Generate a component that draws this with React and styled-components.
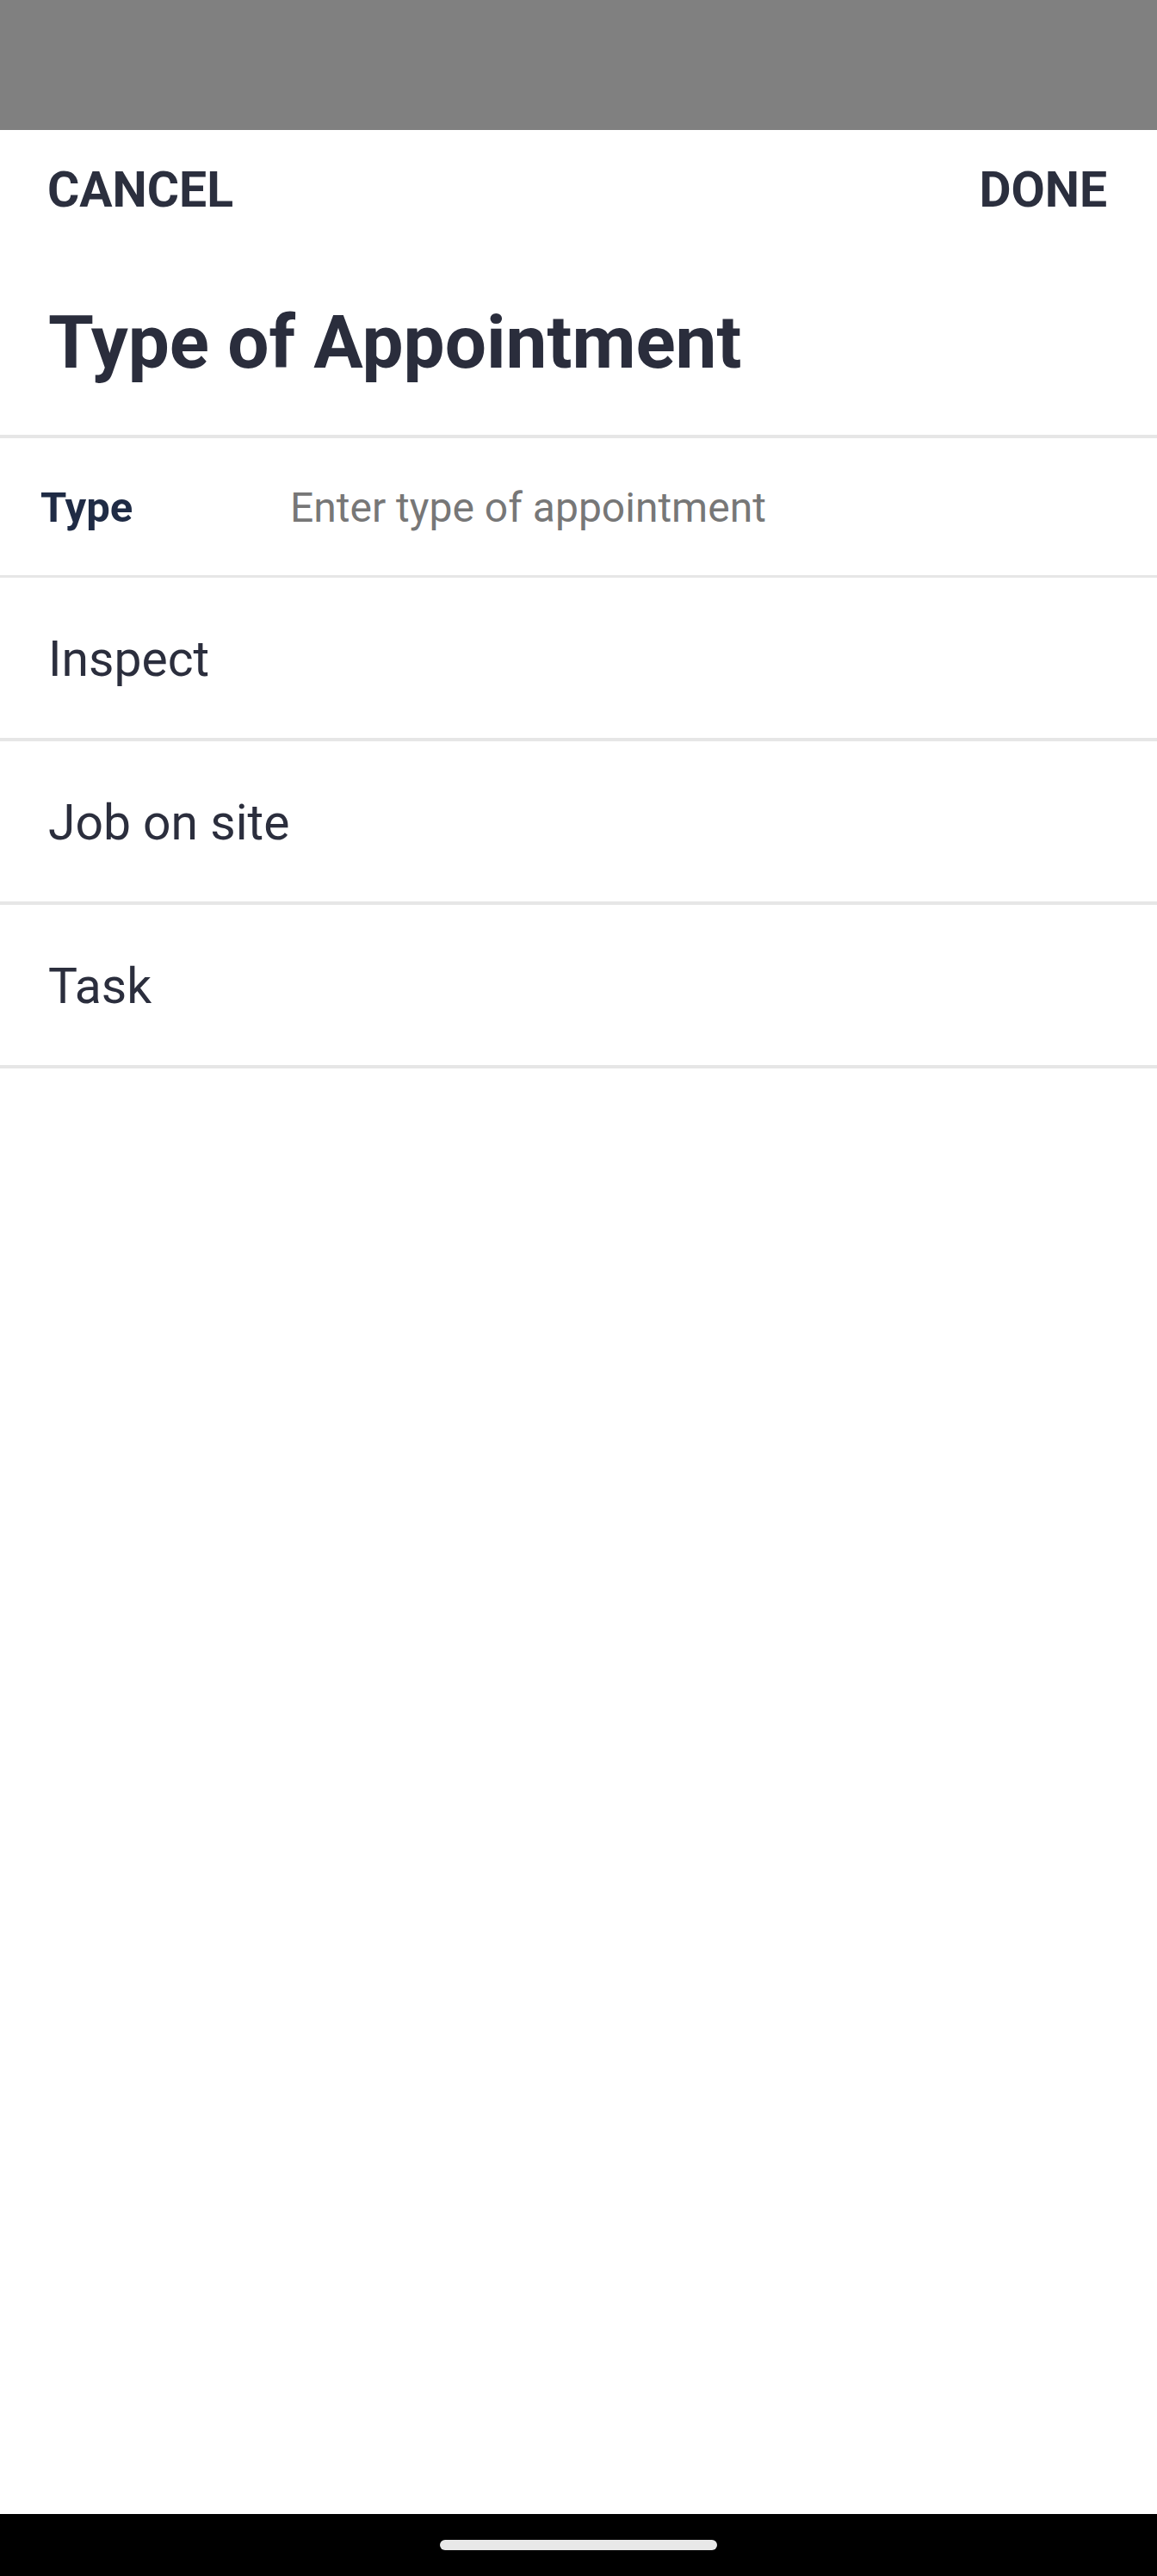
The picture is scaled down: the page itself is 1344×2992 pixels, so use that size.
import React from 'react';
import styled, { createGlobalStyle } from 'styled-components';

const GlobalStyle = createGlobalStyle`
  html, body {
    margin: 0;
    padding: 0;
    background: #ffffff;
  }
  body {
    font-family: Roboto, 'Noto Sans', sans-serif;
    -webkit-font-smoothing: antialiased;
  }
  * {
    box-sizing: border-box;
  }
`;

const Screen = styled.div`
  display: flex;
  flex-direction: column;
  min-height: 100vh;
  background: #ffffff;
`;

const StatusBar = styled.div`
  height: 151px;
  background: #808080;
  flex-shrink: 0;
`;

const Sheet = styled.div`
  flex: 1;
  display: flex;
  flex-direction: column;
`;

const Toolbar = styled.div`
  display: flex;
  justify-content: space-between;
  align-items: center;
  padding: 37px 58px 0 55px;
`;

const ToolbarButton = styled.button`
  background: none;
  border: none;
  padding: 0;
  margin: 0;
  font-family: Roboto, sans-serif;
  font-weight: 700;
  font-size: 57px;
  line-height: 66px;
  color: #2b2f3e;
  letter-spacing: 0;
  cursor: pointer;
`;

const Title = styled.h1`
  margin: 94px 0 0;
  padding: 0 56px 57px;
  font-family: Roboto, sans-serif;
  font-weight: 700;
  font-size: 85.5px;
  line-height: 100px;
  color: #2a2d3c;
  border-bottom: 4px solid #e6e6e6;
`;

const FieldRow = styled.label`
  display: flex;
  align-items: center;
  height: 162px;
  padding: 3px 0 0 47px;
  border-bottom: 3px solid #e6e6e6;
`;

const FieldLabel = styled.span`
  width: 290px;
  flex-shrink: 0;
  font-family: Roboto, sans-serif;
  font-weight: 700;
  font-size: 49px;
  line-height: 58px;
  color: #1f2b45;
`;

const FieldInput = styled.input`
  flex: 1;
  border: none;
  outline: none;
  padding: 0;
  background: transparent;
  font-family: Roboto, sans-serif;
  font-weight: 400;
  font-size: 48px;
  line-height: 58px;
  color: #2b2e3d;
  &::placeholder {
    color: #777777;
  }
`;

const OptionList = styled.ul`
  list-style: none;
  margin: 0;
  padding: 0;
`;

const OptionItem = styled.li`
  display: flex;
  align-items: center;
  height: 190px;
  padding: 3px 56px 0;
  border-bottom: 4px solid #e6e6e6;
  font-family: Roboto, sans-serif;
  font-weight: 400;
  font-size: 57px;
  line-height: 66px;
  color: #2b2e3d;
  cursor: pointer;
`;

const NavBar = styled.div`
  height: 72px;
  background: #000000;
  display: flex;
  justify-content: center;
  align-items: center;
  flex-shrink: 0;
`;

const HomeHandle = styled.div`
  width: 322px;
  height: 12px;
  border-radius: 6px;
  background: #e8e8e8;
`;

const options = ['Inspect', 'Job on site', 'Task'];

export default function App() {
  return (
    <>
      <GlobalStyle />
      <Screen>
        <StatusBar />
        <Sheet>
          <Toolbar>
            <ToolbarButton>CANCEL</ToolbarButton>
            <ToolbarButton>DONE</ToolbarButton>
          </Toolbar>
          <Title>Type of Appointment</Title>
          <FieldRow>
            <FieldLabel>Type</FieldLabel>
            <FieldInput type="text" placeholder="Enter type of appointment" />
          </FieldRow>
          <OptionList>
            {options.map(option => (
              <OptionItem key={option}>{option}</OptionItem>
            ))}
          </OptionList>
        </Sheet>
        <NavBar>
          <HomeHandle />
        </NavBar>
      </Screen>
    </>
  );
}
